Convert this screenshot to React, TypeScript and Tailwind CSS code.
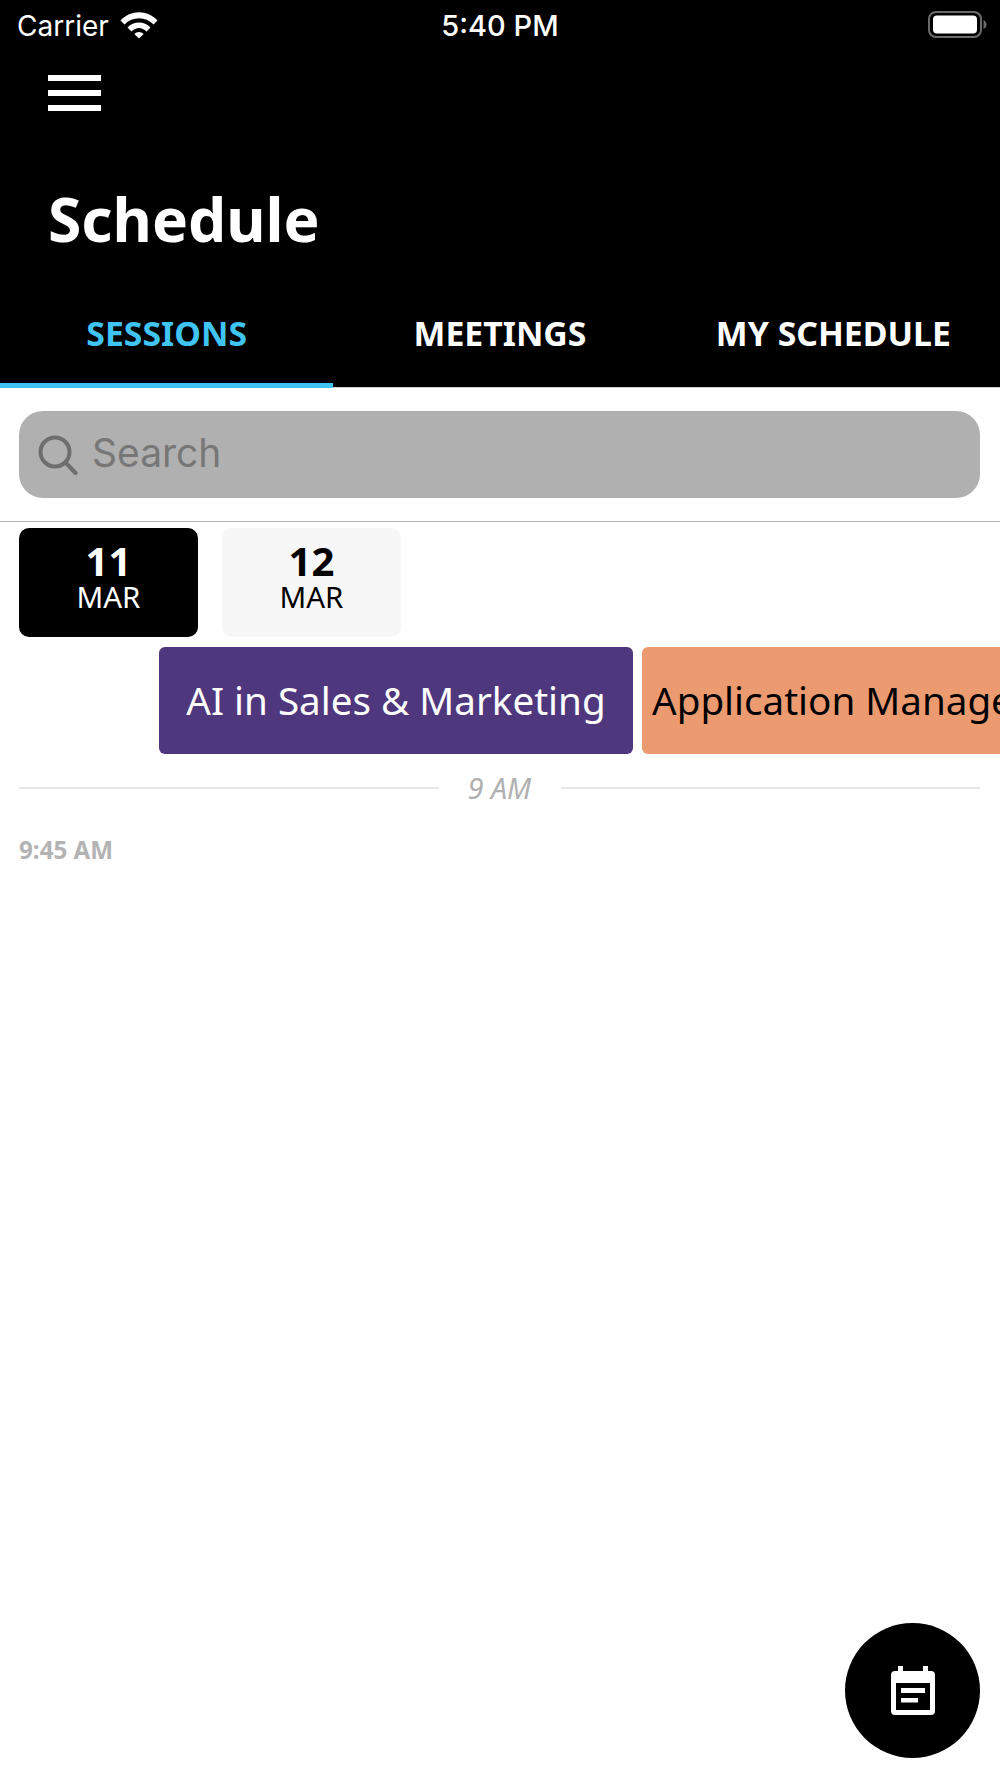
export default function App() {
  const noto = "font-['Noto_Sans',sans-serif]";
  return (
    <div className={`relative w-[1000px] h-[1778px] overflow-hidden bg-white ${noto}`}>
      <header className="bg-black h-[387px] flex flex-col text-white">
        <div className="h-[50px] flex items-center justify-between relative shrink-0">
          <div className="flex items-center pl-[17px] gap-[11px]">
            <span className="font-['Inter',sans-serif] text-[28px] leading-[30px] mt-[2px]">Carrier</span>
            <svg width="38" height="28" viewBox="0 0 38 28" fill="white" aria-hidden="true">
              <path d="M0.5 9.5 C10.5 -1.5 27.5 -1.5 37.5 9.5 L33.5 13.5 C25.5 5 12.5 5 4.5 13.5 Z" />
              <path d="M7.5 16.5 C13.5 9.8 24.5 9.8 30.5 16.5 L26.5 20.5 C22 15.8 16 15.8 11.5 20.5 Z" />
              <path d="M14.3 23 C17 20.2 21 20.2 23.7 23 L19 27.5 Z" />
            </svg>
          </div>
          <span className="absolute left-0 right-0 text-center font-['Inter',sans-serif] font-medium text-[29px] leading-[30px] mt-[2px]">5:40 PM</span>
          <svg className="mr-[13px]" width="59" height="28" viewBox="0 0 59 28" fill="none" aria-hidden="true">
            <rect x="1" y="1" width="52" height="25" rx="7" stroke="#6b6b6b" strokeWidth="2" />
            <rect x="5" y="4.5" width="44" height="18" rx="4" fill="white" />
            <path d="M55.5 9 C57.5 10 58.5 11.5 58.5 13.5 C58.5 15.5 57.5 17 55.5 18 Z" fill="#6b6b6b" />
          </svg>
        </div>
        <div className="pl-[48px] pt-[25px] flex flex-col gap-[9px] shrink-0">
          <div className="w-[53px] h-[6px] bg-white" />
          <div className="w-[53px] h-[6px] bg-white" />
          <div className="w-[53px] h-[6px] bg-white" />
        </div>
        <h1 className="pl-[48px] mt-[73px] font-bold text-[60.5px] leading-[70px]">Schedule</h1>
        <nav className="grid grid-cols-3 mt-auto h-[79px] text-[33.8px] font-bold">
          <div className="flex items-center justify-center border-b-[5px] border-[#40c4f4] text-[#40c4f4] pb-[24px]">SESSIONS</div>
          <div className="flex items-center justify-center border-b-[5px] border-transparent pb-[24px]">MEETINGS</div>
          <div className="flex items-center justify-center border-b-[5px] border-transparent pb-[24px]">MY SCHEDULE</div>
        </nav>
      </header>
      <div className="h-[135px] border-t border-[#d0d0d0] pt-[23px] pl-[19px] pr-[20px]">
        <div className="h-[87px] rounded-[24px] bg-[#b0b0b0] flex items-center pl-[19px] gap-[14px]">
          <svg width="40" height="40" viewBox="0 0 40 40" fill="none" stroke="#6e6e6e" strokeWidth="4" aria-hidden="true">
            <circle cx="17" cy="17" r="14.5" />
            <path d="M27.5 27.5 L37.5 38" strokeLinecap="round" />
          </svg>
          <span className="font-['Inter',sans-serif] text-[39px] leading-[48px] text-[#777777] -mt-[4px]">Search</span>
        </div>
      </div>
      <div className="border-t border-[#b0b0b0] -mt-[1px] pt-[6px] pl-[19px] pr-[20px] flex gap-[24px]">
        <div className="w-[179px] h-[109px] rounded-[10px] bg-black text-white flex flex-col items-center pt-[15px]">
          <span className="font-bold text-[40px] leading-[36px]">11</span>
          <span className="text-[29.5px] leading-[28px] mt-[4px]">MAR</span>
        </div>
        <div className="w-[179px] h-[109px] rounded-[10px] bg-[#f7f7f7] text-black flex flex-col items-center pt-[15px]">
          <span className="font-bold text-[40px] leading-[36px]">12</span>
          <span className="text-[29.5px] leading-[28px] mt-[4px]">MAR</span>
        </div>
      </div>
      <div className="mt-[10px] pl-[159px] flex gap-[9px] whitespace-nowrap">
        <div className="w-[474px] h-[107px] rounded-[6px] bg-[#4f377e] text-white text-[38.6px] leading-[107px] shrink-0 text-center">AI in Sales &amp; Marketing</div>
        <div className="h-[107px] rounded-l-[6px] bg-[#ec9b71] text-black text-[38.6px] leading-[107px] pl-[10px] shrink-0">Application Management</div>
      </div>
      <div className="mt-[16px] pl-[19px] pr-[20px] flex items-center">
        <div className="flex-1 h-[2px] bg-[#e6e6e6]" />
        <span className="w-[122px] text-center italic text-[28.6px] leading-[36px] text-[#b0b0b0]">9 AM</span>
        <div className="flex-1 h-[2px] bg-[#e6e6e6]" />
      </div>
      <div className="mt-[28px] pl-[19px] font-bold text-[24.2px] leading-[32px] text-[#b3b3b3]">9:45 AM</div>
      <button className="absolute left-[845px] top-[1623px] w-[135px] h-[135px] rounded-full bg-black flex items-center justify-center" aria-label="Schedule">
        <svg width="44" height="49" viewBox="0 0 44 49" aria-hidden="true">
          <path fillRule="evenodd" fill="white" d="M7 0 H12 V5 H32 V0 H37 V5 H40 Q44 5 44 9 V45 Q44 49 40 49 H4 Q0 49 0 45 V9 Q0 5 4 5 H7 Z M5 17 V44 H39 V17 Z" />
          <rect x="10" y="22" width="24" height="5" fill="white" />
          <rect x="10" y="32" width="17" height="4.5" fill="white" />
        </svg>
      </button>
    </div>
  );
}
